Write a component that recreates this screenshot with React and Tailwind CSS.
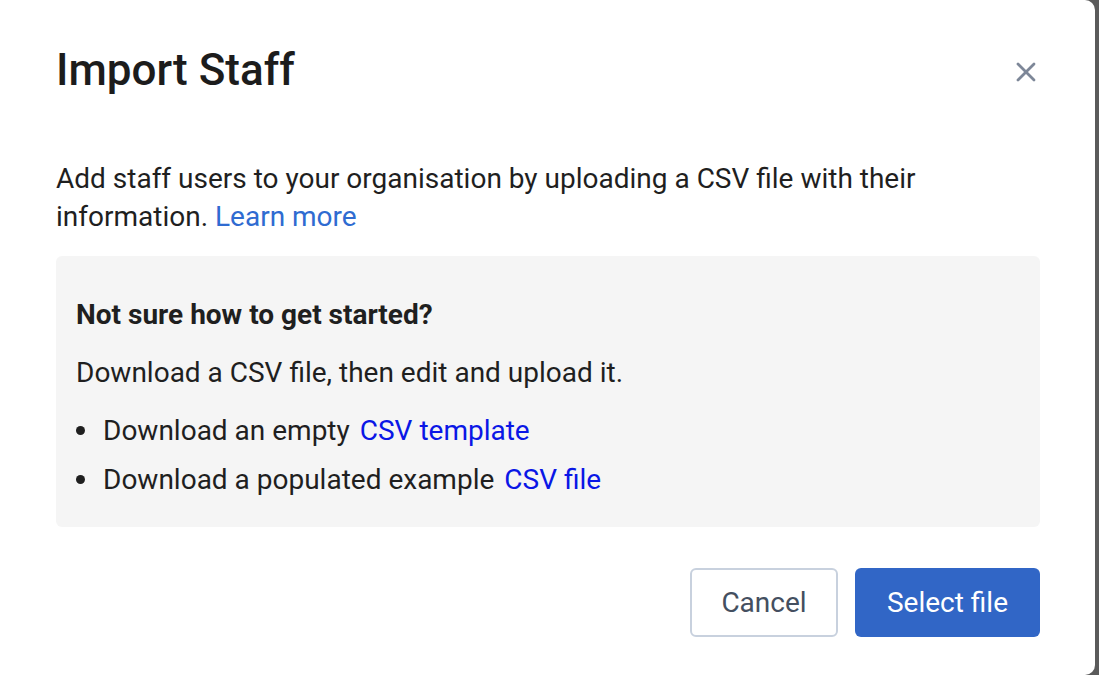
import { X } from "lucide-react";

function App() {
  return (
    <div className="h-screen w-full bg-[#5b5b5b] flex font-['Roboto',sans-serif]">
      <div className="w-[1095px] h-full bg-white rounded-tr-[10px] rounded-br-[10px] pl-[56px] pr-[55px] flex flex-col">
        <div className="flex items-center justify-between pt-[44px]">
          <h1 className="text-[44px] leading-[52px] font-medium text-[#1c1c1c]">
            Import Staff
          </h1>
          <button className="text-[#7d8798] mr-[-2px] mt-[3px]">
            <X size={32} strokeWidth={2.1} />
          </button>
        </div>

        <p className="mt-[64px] text-[28px] leading-[38px] text-[#1f1f1f]">
          <span className="block">
            Add staff users to your organisation by uploading a CSV file with
            their
          </span>
          <span>information. </span>
          <a href="#" className="text-[#2f6bd1]">
            Learn more
          </a>
        </p>

        <div className="mt-[20px] bg-[#f5f5f5] rounded-[6px] pl-[20px] pt-[40px] pb-[23px] text-[#1f1f1f] text-[28px]">
          <h2 className="leading-[38px] font-bold">
            Not sure how to get started?
          </h2>
          <p className="mt-[20px] leading-[38px]">
            Download a CSV file, then edit and upload it.
          </p>
          <ul className="mt-[14px] leading-[49px]">
            <li className="flex items-center">
              <span className="w-[9px] h-[9px] rounded-full bg-[#1f1f1f] mr-[18px]" />
              <span>Download an empty</span>
              <a href="#" className="text-[#0a17e6] ml-[10px]">
                CSV template
              </a>
            </li>
            <li className="flex items-center">
              <span className="w-[9px] h-[9px] rounded-full bg-[#1f1f1f] mr-[18px]" />
              <span>Download a populated example</span>
              <a href="#" className="text-[#0a17e6] ml-[10px]">
                CSV file
              </a>
            </li>
          </ul>
        </div>

        <div className="mt-[41px] flex justify-end gap-[17px]">
          <button className="w-[148px] h-[69px] rounded-[6px] border-2 border-[#c8d1de] text-[28px] text-[#444f60]">
            Cancel
          </button>
          <button className="w-[185px] h-[69px] rounded-[6px] bg-[#3166c6] text-[28px] text-white">
            Select file
          </button>
        </div>
      </div>
    </div>
  );
}

export default App;
